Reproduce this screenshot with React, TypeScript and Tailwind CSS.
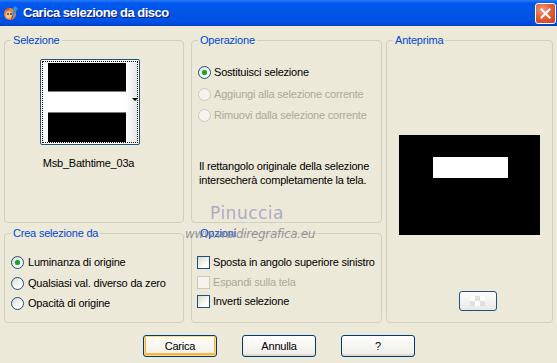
import React from "react";

const font = { fontFamily: '"Liberation Sans", Arial, sans-serif' };

function Radio({ checked, disabled }: { checked?: boolean; disabled?: boolean }) {
  return (
    <span
      className={
        "relative inline-flex h-[13px] w-[13px] shrink-0 items-center justify-center rounded-full border " +
        (disabled
          ? "border-[#cac8bb] bg-[#f4f3ee]"
          : "border-[#1c5180] bg-[linear-gradient(135deg,#dcd9d0,#ffffff_70%)]")
      }
    >
      {checked && <span className="h-[5px] w-[5px] rounded-full bg-[#21a121] shadow-[0_0_1px_#5fd35f]" />}
    </span>
  );
}

function Check({ disabled }: { disabled?: boolean }) {
  return (
    <span
      className={
        "inline-block h-[13px] w-[13px] shrink-0 border " +
        (disabled
          ? "border-[#cac8bb] bg-[#f4f3ee]"
          : "border-[#1c5180] bg-[linear-gradient(135deg,#dcd8ce,#ffffff_75%)]")
      }
    />
  );
}

function Group({
  title,
  className,
  children,
}: {
  title: string;
  className: string;
  children?: React.ReactNode;
}) {
  return (
    <fieldset className={"min-w-0 rounded-[4px] border border-[#d0d0bf] " + className}>
      <legend className="ml-[6px] px-[2px] text-[11px] leading-[13px] text-[#0046d5]">{title}</legend>
      {children}
    </fieldset>
  );
}

function XpButton({ label, def }: { label: string; def?: boolean }) {
  return (
    <button
      className={
        "h-[22px] w-[74px] rounded-[3px] border border-[#003c74] text-[11px] text-black " +
        (def
          ? "bg-[linear-gradient(#fffdf6,#f2f1ea_85%,#d6d0c5)] shadow-[inset_0_0_0_1px_#fbd88a,inset_0_-1px_0_2px_#f6b642]"
          : "bg-[linear-gradient(#ffffff,#f0efe9_85%,#d6d0c5)]")
      }
    >
      {label}
    </button>
  );
}

export default function App() {
  return (
    <div
      className="relative h-[363px] w-[557px] overflow-hidden whitespace-nowrap bg-[#ece9d8] text-[11px] tracking-[-0.2px] text-black"
      style={font}
    >
      {/* title bar */}
      <div className="flex h-[26px] items-center justify-between bg-[linear-gradient(#2d7cf8,#0058ee_12%,#0054e3_50%,#0050e6_85%,#003fc2)] pl-[3px] pr-[1px]">
        <div className="flex items-center gap-[4px]">
          <svg width="16" height="16" viewBox="0 0 16 16">
            <ellipse cx="7" cy="9" rx="6" ry="6" fill="#e8843a" />
            <ellipse cx="6" cy="10" rx="3.5" ry="3.5" fill="#f6c48a" />
            <circle cx="5" cy="9" r="0.9" fill="#3a2a1a" />
            <circle cx="8" cy="9" r="0.9" fill="#3a2a1a" />
            <path d="M2 5 L5 2 L6 5 Z" fill="#c24a1e" />
            <path d="M11 1 L15 3 L10 12 L9 11 Z" fill="#3a8fe0" />
            <path d="M10 12 L8 15 L9 11 Z" fill="#333" />
          </svg>
          <span className="text-[13px] font-bold tracking-[-0.5px] text-white [text-shadow:1px_1px_#0a1883]">
            Carica selezione da disco
          </span>
        </div>
        <div className="flex h-[21px] w-[21px] items-center justify-center rounded-[3px] border border-white bg-[radial-gradient(circle_at_35%_30%,#f49a7c,#e25b33_50%,#c6401c)]">
          <svg width="11" height="11" viewBox="0 0 11 11">
            <path d="M1.5 1.5 L9.5 9.5 M9.5 1.5 L1.5 9.5" stroke="#fff" strokeWidth="2" strokeLinecap="square" />
          </svg>
        </div>
      </div>

      {/* body */}
      <div className="flex gap-[4px] pl-[4px] pt-[8px]">
        <div className="flex flex-col gap-[4px]">
          <div className="flex gap-[7px]">
            <Group title="Selezione" className="h-[189px] w-[180px]">
              <div className="flex flex-col items-start pl-[35px] pt-[12px]">
                <div className="flex w-[100px] flex-col items-center">
                  <div className="relative h-[86px] w-[100px] rounded-[2px] border border-[#1c5180] bg-white p-[1px]">
                    <div className="flex h-full w-full border border-dotted border-black">
                      <div className="ml-[5px] mt-[1px] flex h-[79px] w-[78px] flex-col bg-black">
                        <div className="mt-[28px] h-[22px] w-full border-y border-[#7a7a7a] bg-white" />
                      </div>
                      <div className="relative flex-1 bg-[linear-gradient(90deg,#fff,#e6e6e6)]">
                        <span className="absolute left-[6px] top-[36px] h-0 w-0 border-x-[3px] border-t-[3px] border-x-transparent border-t-black" />
                      </div>
                    </div>
                  </div>
                  <div className="mt-[12px] pr-[3px] leading-[13px]">Msb_Bathtime_03a</div>
                </div>
              </div>
            </Group>
            <Group title="Operazione" className="h-[189px] w-[191px]">
              <div className="flex flex-col pl-[6px] pt-[14px]">
                <div className="flex h-[22px] items-center gap-[3px]">
                  <Radio checked />
                  <span>Sostituisci selezione</span>
                </div>
                <div className="flex h-[22px] items-center gap-[3px] text-[#aca899]">
                  <Radio disabled />
                  <span>Aggiungi alla selezione corrente</span>
                </div>
                <div className="flex h-[21px] items-center gap-[3px] text-[#aca899]">
                  <Radio disabled />
                  <span>Rimuovi dalla selezione corrente</span>
                </div>
                <p className="mt-[33px] pl-[1px] leading-[14px]">
                  Il rettangolo originale della selezione
                  <br />
                  intersecherà completamente la tela.
                </p>
              </div>
            </Group>
          </div>
          <div className="flex gap-[7px]">
            <Group title="Crea selezione da" className="h-[96px] w-[180px]">
              <div className="flex flex-col pl-[6px] pt-[12px]">
                <div className="flex h-[21px] items-center gap-[4px]">
                  <Radio checked />
                  <span>Luminanza di origine</span>
                </div>
                <div className="flex h-[20px] items-center gap-[4px]">
                  <Radio />
                  <span>Qualsiasi val. diverso da zero</span>
                </div>
                <div className="flex h-[20px] items-center gap-[4px]">
                  <Radio />
                  <span>Opacità di origine</span>
                </div>
              </div>
            </Group>
            <Group title="Opzioni" className="h-[96px] w-[191px]">
              <div className="flex flex-col pl-[5px] pt-[12px]">
                <div className="flex h-[20px] items-center gap-[3px]">
                  <Check />
                  <span>Sposta in angolo superiore sinistro</span>
                </div>
                <div className="flex h-[20px] items-center gap-[3px] text-[#aca899]">
                  <Check disabled />
                  <span>Espandi sulla tela</span>
                </div>
                <div className="flex h-[19px] items-center gap-[3px]">
                  <Check />
                  <span>Inverti selezione</span>
                </div>
              </div>
            </Group>
          </div>
        </div>
        <Group title="Anteprima" className="h-[289px] w-[167px]">
          <div className="flex flex-col items-center pt-[88px]">
            <div className="h-[100px] w-[141px] bg-black pl-[34px] pt-[22px]">
              <div className="h-[21px] w-[75px] bg-white" />
            </div>
            <div className="ml-[16px] mt-[56px] flex h-[20px] w-[38px] items-center justify-center rounded-[3px] border border-[#1c5180] bg-[linear-gradient(#fdfdfd,#e9e9e9)]">
              <div className="grid grid-cols-3">
                <span className="h-[5px] w-[5px] bg-white" />
                <span className="h-[5px] w-[5px] bg-[#e0e0e0]" />
                <span className="h-[5px] w-[5px] bg-white" />
                <span className="h-[5px] w-[5px] bg-[#e0e0e0]" />
                <span className="h-[5px] w-[5px] bg-white" />
                <span className="h-[5px] w-[5px] bg-[#e0e0e0]" />
              </div>
            </div>
          </div>
        </Group>
      </div>

      {/* buttons */}
      <div className="mt-[12px] flex gap-[25px] pl-[143px]">
        <XpButton label="Carica" def />
        <XpButton label="Annulla" />
        <XpButton label="?" />
      </div>

      {/* watermark */}
      <div
        className="pointer-events-none absolute left-[210px] top-[201px] text-[17px] tracking-[0.5px] text-[#9a9ac4]/80"
        style={{ fontFamily: '"DejaVu Sans", Verdana, sans-serif' }}
      >
        Pinuccia
      </div>
      <div
        className="pointer-events-none absolute left-[185px] top-[225px] text-[12px] italic tracking-[-0.3px] text-[#7d7d8c]/80"
        style={{ fontFamily: '"DejaVu Sans", Verdana, sans-serif' }}
      >
        www.waidiregrafica.eu
      </div>
    </div>
  );
}
